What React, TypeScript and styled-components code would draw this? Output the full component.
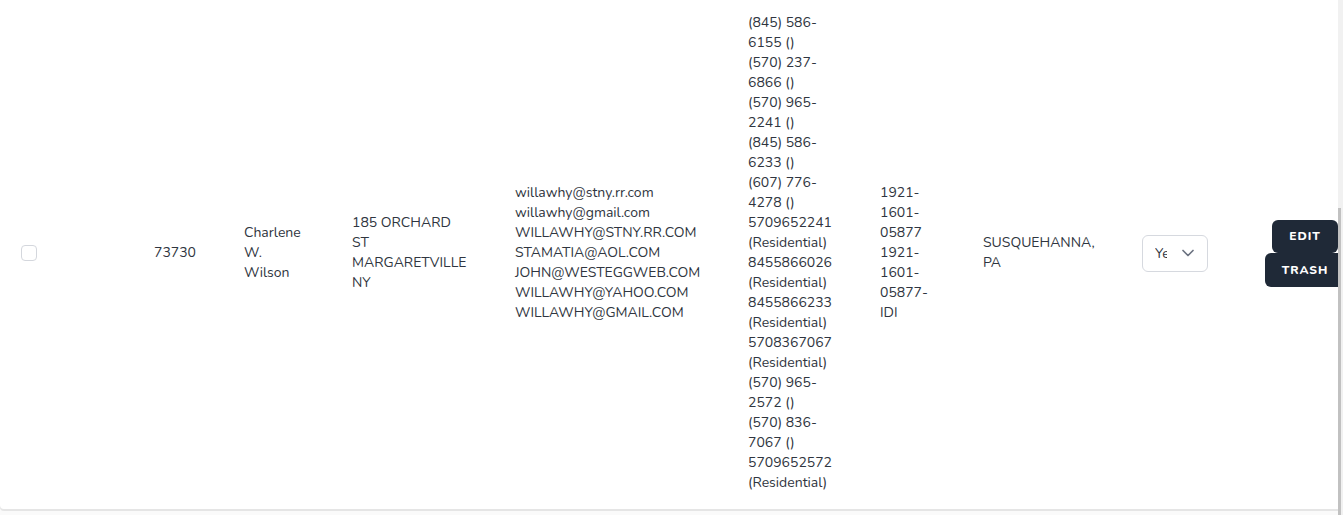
import React from "react";
import styled, { createGlobalStyle } from "styled-components";
import { ChevronDown } from "lucide-react";

const GlobalStyle = createGlobalStyle`
  html, body { margin: 0; padding: 0; }
  body {
    background: #fafafa;
    font-family: "Nunito", Lato, "Open Sans", sans-serif;
    color: #2f3540;
  }
`;

const Page = styled.div`
  display: flex;
  height: 515px;
  overflow: hidden;
`;

const Viewport = styled.main`
  flex: 1;
  min-width: 0;
  overflow: hidden;
`;

const Card = styled.div`
  width: max-content;
  margin-top: -3px;
  background: #ffffff;
  border-radius: 0 0 4px 4px;
  box-shadow: 0 2px 0 #e5e5e5;
`;

const Row = styled.div`
  display: grid;
  grid-template-columns: 154px 90px 108px 163px 233px 132px 103px 159px 123px 80px 40px;
  align-items: center;
  padding: 16px 0;
  font-size: 14px;
  line-height: 20px;
`;

const Cell = styled.div<{ $w?: number; $pl?: number; $center?: boolean }>`
  max-width: ${(p) => (p.$w ? `${p.$w}px` : "none")};
  padding-left: ${(p) => (p.$pl ? `${p.$pl}px` : "0")};
  display: ${(p) => (p.$center ? "flex" : "block")};
  flex-direction: column;
  align-items: center;
`;

const Line = styled.div``;

const Checkbox = styled.input.attrs({ type: "checkbox" })`
  appearance: none;
  display: block;
  width: 16px;
  height: 16px;
  margin: 0;
  border: 1px solid #d4d7dd;
  border-radius: 4px;
  background: #fff;
`;

const SelectWrap = styled.div`
  position: relative;
  width: 66px;
`;

const Select = styled.select`
  appearance: none;
  width: 66px;
  height: 37px;
  padding: 0 40px 0 12px;
  border: 1px solid #d6d9df;
  border-radius: 6px;
  background: #fff;
  font-family: inherit;
  font-size: 14px;
  color: #2f3540;
`;

const Chevron = styled(ChevronDown)`
  position: absolute;
  right: 10px;
  top: 50%;
  transform: translateY(-50%);
  color: #6b7280;
  pointer-events: none;
`;

const Button = styled.button<{ $h: number }>`
  height: ${(p) => p.$h}px;
  padding: 0 17px;
  border: none;
  border-radius: 6px;
  background: #1f2937;
  color: #fff;
  font-family: inherit;
  font-size: 12px;
  font-weight: 800;
  letter-spacing: 0.08em;
  text-transform: uppercase;
`;

const ScrollTrack = styled.div`
  width: 5px;
  flex: none;
  display: flex;
  flex-direction: column;
  background: #f1f1f1;
`;

const ScrollSpacer = styled.div`
  height: 208px;
  flex: none;
`;

const ScrollThumb = styled.div`
  flex: 1;
  width: 3px;
  background: #c1c1c1;
`;

const emails = [
  "willawhy@stny.rr.com",
  "willawhy@gmail.com",
  "WILLAWHY@STNY.RR.COM",
  "STAMATIA@AOL.COM",
  "JOHN@WESTEGGWEB.COM",
  "WILLAWHY@YAHOO.COM",
  "WILLAWHY@GMAIL.COM",
];

const phones = [
  "(845) 586-6155 ()",
  "(570) 237-6866 ()",
  "(570) 965-2241 ()",
  "(845) 586-6233 ()",
  "(607) 776-4278 ()",
  "5709652241 (Residential)",
  "8455866026 (Residential)",
  "8455866233 (Residential)",
  "5708367067 (Residential)",
  "(570) 965-2572 ()",
  "(570) 836-7067 ()",
  "5709652572 (Residential)",
];

export default function App() {
  return (
    <>
      <GlobalStyle />
      <Page>
        <Viewport>
          <Card>
            <Row>
              <Cell $pl={21}>
                <Checkbox />
              </Cell>
              <Cell>73730</Cell>
              <Cell $w={64}>Charlene W. Wilson</Cell>
              <Cell $w={116}>185 ORCHARD ST MARGARETVILLE NY</Cell>
              <Cell>
                {emails.map((e) => (
                  <Line key={e}>{e}</Line>
                ))}
              </Cell>
              <Cell $w={90}>
                {phones.map((p, i) => (
                  <Line key={i}>{p}</Line>
                ))}
              </Cell>
              <Cell $w={48}>1921-1601-05877 1921-1601-05877-IDI</Cell>
              <Cell $w={118}>SUSQUEHANNA, PA</Cell>
              <Cell>
                <SelectWrap>
                  <Select defaultValue="Yes">
                    <option>Yes</option>
                    <option>No</option>
                  </Select>
                  <Chevron size={20} strokeWidth={2} />
                </SelectWrap>
              </Cell>
              <Cell $center>
                <Button $h={33}>Edit</Button>
                <Button $h={34}>Trash</Button>
              </Cell>
              <Cell />
            </Row>
          </Card>
        </Viewport>
        <ScrollTrack>
          <ScrollSpacer />
          <ScrollThumb />
        </ScrollTrack>
      </Page>
    </>
  );
}
